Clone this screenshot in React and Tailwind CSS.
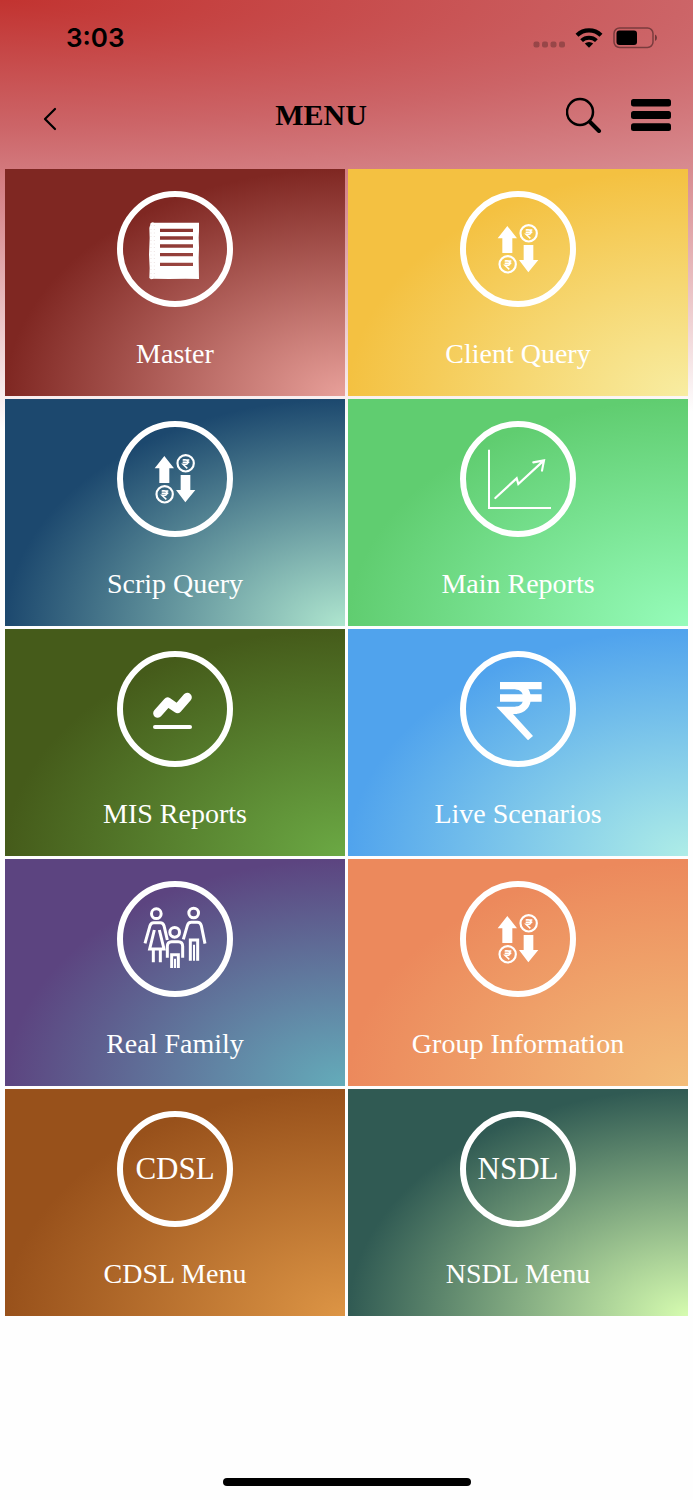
import React from "react";

// Icons share one 312 x 312 canvas, the inside of the white ring
const MenuIcon = ({ children }) => (
  <svg viewBox="55 51 312 312" className="size-full" fill="none" aria-hidden="true">
    {children}
  </svg>
);

const MasterIcon = () => (
  <MenuIcon>
    <path
      fill="#fff"
      fillRule="evenodd"
      d="M138 129l6-2 5 1 134 0 0 25-1 20 1 30-1 30 1 64-40-1-50 1-46-1-8 2-5-4 1-30-2-40 2-50-1-30zM166 146v10h99v-10zM166 169v10h99v-10zM166 193v10h99v-10zM166 219v10h99v-10zM166 248v10h99v-10z"
    />
    <path stroke="#a9807c" strokeWidth="1" strokeDasharray="2 9" d="M149 136v158M139 136v156" />
  </MenuIcon>
);

const Coin = ({ x, y }) => (
  <g transform={`translate(${x} ${y})`} stroke="#fff">
    <circle r="24.5" strokeWidth="6.5" />
    <path strokeWidth="4.5" d="M-9-10H11M-9-3H11M-7-11h5c12 0 12 14 0 14h-6L5 15" />
  </g>
);

const QueryIcon = () => (
  <MenuIcon>
    <path fill="#fff" d="M179 138l29 37h-14v44h-30v-44h-14zM242 277l30-37h-15v-45h-29v45h-14z" />
    <Coin x={243} y={160} />
    <Coin x={180} y={253} />
  </MenuIcon>
);

const ChartIcon = () => (
  <MenuIcon>
    <g stroke="#fff" strokeWidth="6.5">
      <path d="M124 119v175h186" strokeWidth="6" />
      <path strokeLinecap="round" d="M143 264l64-59 5 17 76-70M257 157l32-6-6 31" />
    </g>
  </MenuIcon>
);

const MisIcon = () => (
  <MenuIcon>
    <g stroke="#fff" strokeLinecap="round" strokeLinejoin="round">
      <path strokeWidth="27" d="M159 220l30-34 29 20 30-34" />
      <path strokeWidth="12" d="M151 261h105" />
    </g>
  </MenuIcon>
);

const RupeeIcon = () => (
  <MenuIcon>
    <g stroke="#fff" strokeWidth="22">
      <path d="M157 137h125M157 174h125" />
      <path d="M203 137c47 0 48 74 0 74" />
    </g>
    <path fill="#fff" d="M146 200h62v22h-12l60 66-15 13z" />
  </MenuIcon>
);

const FamilyIcon = () => (
  <MenuIcon>
    <g stroke="#fff" strokeWidth="9">
      <circle cx="155" cy="131" r="14.5" />
      <circle cx="267" cy="129" r="14.5" />
      <circle cx="210" cy="187" r="14.5" />
      {/* mother */}
      <path d="M121 220l15-53q3-9 11-9h20q8 0 11 9l10 43M149 180l-14 57h11v40M164 180l14 57h-11v40M146 237h21" />
      {/* father */}
      <path d="M236 208l12-41q3-10 12-10h18q9 0 12 10l11 54M257 272v-62h22v62" />
      <path strokeWidth="6" d="M268 224v48" />
      {/* child */}
      <path d="M188 263v-34q0-14 13-14h20q13 0 13 14v34M201 294v-40h20v40" />
      <path strokeWidth="6" d="M211 266v28" />
    </g>
  </MenuIcon>
);

const menuItems = [
  {
    label: "Master",
    icon: <MasterIcon />,
    bg: "bg-[radial-gradient(farthest-side_at_bottom_right,#e8a09a,#7f2722)]",
  },
  {
    label: "Client Query",
    icon: <QueryIcon />,
    bg: "bg-[radial-gradient(farthest-side_at_bottom_right,#f8eda2,#f4c141)]",
  },
  {
    label: "Scrip Query",
    icon: <QueryIcon />,
    bg: "bg-[radial-gradient(farthest-side_at_bottom_right,#afe6cf,#1c486e)]",
  },
  {
    label: "Main Reports",
    icon: <ChartIcon />,
    bg: "bg-[radial-gradient(farthest-side_at_bottom_right,#96fcba,#60cd70)]",
  },
  {
    label: "MIS Reports",
    icon: <MisIcon />,
    bg: "bg-[radial-gradient(farthest-side_at_bottom_right,#6ba944,#455b1a)]",
  },
  {
    label: "Live Scenarios",
    icon: <RupeeIcon />,
    bg: "bg-[radial-gradient(farthest-side_at_bottom_right,#aeede7,#50a3ed)]",
  },
  {
    label: "Real Family",
    icon: <FamilyIcon />,
    bg: "bg-[radial-gradient(farthest-side_at_bottom_right,#64acba,#5c4480)]",
  },
  {
    label: "Group Information",
    icon: <QueryIcon />,
    bg: "bg-[radial-gradient(farthest-side_at_bottom_right,#f3bd79,#ec895c)]",
  },
  {
    label: "CDSL Menu",
    text: "CDSL",
    bg: "bg-[radial-gradient(farthest-side_at_bottom_right,#dd9545,#98511b)]",
  },
  {
    label: "NSDL Menu",
    text: "NSDL",
    bg: "bg-[radial-gradient(farthest-side_at_bottom_right,#d6fcb0,#305a53)]",
  },
];

const StatusBar = () => (
  <div className="flex h-[76px] items-center justify-between pr-9 pl-[66px]">
    <span className="font-['Inter',sans-serif] text-[26px] leading-8 font-semibold">3:03</span>
    <div className="flex items-center">
      {/* Signal */}
      <svg className="mr-2.5 h-6 w-8" viewBox="0 0 32 24" fillOpacity="0.25" aria-hidden="true">
        <rect x="0.5" y="15.5" width="6" height="6" rx="2" />
        <rect x="9" y="15.5" width="6" height="6" rx="2" />
        <rect x="17.5" y="15.5" width="6" height="6" rx="2" />
        <rect x="26" y="15.5" width="6" height="6" rx="2" />
      </svg>
      {/* Wifi */}
      <svg className="mr-2.5 h-6 w-7" viewBox="0 0 28 24" fill="none" stroke="#000" aria-hidden="true">
        <path strokeWidth="4.2" d="M2 9.3a17.3 17.3 0 0 1 24 0" />
        <path strokeWidth="4" d="M6.6 14.6a10.8 10.8 0 0 1 14.8 0" />
        <path fill="#000" stroke="none" d="M9.8 17.6a6 6 0 0 1 8.4 0l-4.2 4.2z" />
      </svg>
      {/* Battery */}
      <svg className="h-6 w-11" viewBox="0 0 44 24" fill="none" aria-hidden="true">
        <rect x="1" y="2" width="39" height="19.5" rx="5.5" stroke="#000" strokeOpacity="0.4" strokeWidth="1.5" />
        <rect x="3.5" y="4.5" width="20.5" height="14.5" rx="3" fill="#000" />
        <path fill="#000" fillOpacity="0.45" d="M42 8.5q2 1 2 3.2t-2 3.3z" />
      </svg>
    </div>
  </div>
);

const Header = () => (
  <header className="flex h-[78px] items-center pr-[22px] pl-9">
    <button type="button" aria-label="Back" className="w-10">
      <svg className="h-8 w-7" viewBox="0 0 28 32" fill="none" stroke="#000" strokeWidth="2.2" aria-hidden="true">
        <path strokeLinecap="round" strokeLinejoin="round" d="M19 10L9 20l10 10" />
      </svg>
    </button>
    <h1 className="flex-1 text-center text-[30px] leading-9 font-bold">MENU</h1>
    <div className="flex items-center gap-[29px]">
      <button type="button" aria-label="Search">
        <svg className="size-9" viewBox="0 0 36 36" fill="none" stroke="#000" aria-hidden="true">
          <circle cx="14" cy="15" r="13" strokeWidth="2.5" />
          <path strokeWidth="4" strokeLinecap="round" d="M24 25l9 9" />
        </svg>
      </button>
      <button type="button" aria-label="Open menu">
        <svg className="h-8 w-10" viewBox="0 0 40 32" aria-hidden="true">
          <rect width="40" height="7.5" rx="2.5" />
          <rect y="12" width="40" height="8" rx="2.5" />
          <rect y="24.3" width="40" height="7.7" rx="2.5" />
        </svg>
      </button>
    </div>
  </header>
);

const MenuTile = ({ item }) => (
  <button
    type="button"
    className={`flex h-[227px] flex-col items-center pt-[22px] text-white ${item.bg}`}
  >
    <span className="flex size-[116px] items-center justify-center rounded-full border-6 border-white text-[31px]">
      {item.icon || item.text}
    </span>
    <span className="mt-[29px] text-[28px] leading-9">{item.label}</span>
  </button>
);

const App = () => {
  return (
    <div className="flex min-h-screen flex-col bg-[#fefefe] bg-[radial-gradient(340%_430px_at_top_left,#c23330,#cc6467_29%,#d88b90_49%,#fefefe)] font-['Liberation_Serif',serif] text-black">
      <StatusBar />
      <Header />

      {/* Menu Grid */}
      <main className="mt-[15px] grid grid-cols-2 gap-[3px] px-[5px]">
        {menuItems.map((item) => (
          <MenuTile key={item.label} item={item} />
        ))}
      </main>

      {/* Home Indicator */}
      <div className="mx-auto mt-auto mb-[14px] h-2 w-[248px] rounded-full bg-black" />
    </div>
  );
};

export default App;
